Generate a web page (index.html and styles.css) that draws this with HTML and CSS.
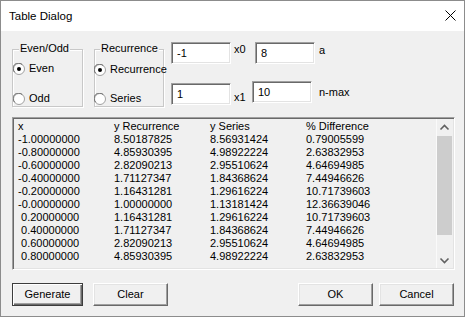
FILE: index.html
```html
<!DOCTYPE html>
<html>
<head>
<meta charset="utf-8">
<title>Table Dialog</title>
<link rel="stylesheet" href="styles.css">
</head>
<body>
<div class="window">
  <div class="titlebar">
    <span class="title">Table Dialog</span>
    <svg class="close" width="11" height="11" viewBox="0 0 11 11"><path d="M0.5 0.5 L10.5 10.5 M10.5 0.5 L0.5 10.5" stroke="#000" stroke-width="1" fill="none"/></svg>
  </div>
  <div class="client">
    <div class="top">
      <div class="group g1">
        <span class="legend">Even/Odd</span>
        <div class="radio-row">
          <svg class="radio" width="12" height="12" viewBox="0 0 12 12"><circle cx="6" cy="6" r="5.5" fill="#fff" stroke="#a0a0a0"/><path d="M1.6 9.2 A5 5 0 0 1 9.2 1.6" stroke="#696969" fill="none"/><circle cx="6" cy="6" r="2" fill="#000"/></svg>
          <span>Even</span>
        </div>
        <div class="radio-row">
          <svg class="radio" width="12" height="12" viewBox="0 0 12 12"><circle cx="6" cy="6" r="5.5" fill="#fff" stroke="#a0a0a0"/><path d="M1.6 9.2 A5 5 0 0 1 9.2 1.6" stroke="#696969" fill="none"/></svg>
          <span>Odd</span>
        </div>
      </div>
      <div class="group g2">
        <span class="legend">Recurrence</span>
        <div class="radio-row">
          <svg class="radio" width="12" height="12" viewBox="0 0 12 12"><circle cx="6" cy="6" r="5.5" fill="#fff" stroke="#a0a0a0"/><path d="M1.6 9.2 A5 5 0 0 1 9.2 1.6" stroke="#696969" fill="none"/><circle cx="6" cy="6" r="2" fill="#000"/></svg>
          <span>Recurrence</span>
        </div>
        <div class="radio-row">
          <svg class="radio" width="12" height="12" viewBox="0 0 12 12"><circle cx="6" cy="6" r="5.5" fill="#fff" stroke="#a0a0a0"/><path d="M1.6 9.2 A5 5 0 0 1 9.2 1.6" stroke="#696969" fill="none"/></svg>
          <span>Series</span>
        </div>
      </div>
      <div class="params">
        <div class="prow r1">
          <div class="edit">-1</div>
          <span class="plabel l-x0">x0</span>
          <div class="edit">8</div>
          <span class="plabel l-a">a</span>
        </div>
        <div class="prow r2">
          <div class="edit e-1">1</div>
          <span class="plabel l-x1">x1</span>
          <div class="edit">10</div>
          <span class="plabel l-n">n-max</span>
        </div>
      </div>
    </div>

    <div class="list">
      <div class="list-body">
        <div class="lrow"><span>x</span><span>y Recurrence</span><span>y Series</span><span>% Difference</span></div>
        <div class="lrow"><span>-1.00000000</span><span>8.50187825</span><span>8.56931424</span><span>0.79005599</span></div>
        <div class="lrow"><span>-0.80000000</span><span>4.85930395</span><span>4.98922224</span><span>2.63832953</span></div>
        <div class="lrow"><span>-0.60000000</span><span>2.82090213</span><span>2.95510624</span><span>4.64694985</span></div>
        <div class="lrow"><span>-0.40000000</span><span>1.71127347</span><span>1.84368624</span><span>7.44946626</span></div>
        <div class="lrow"><span>-0.20000000</span><span>1.16431281</span><span>1.29616224</span><span>10.71739603</span></div>
        <div class="lrow"><span>-0.00000000</span><span>1.00000000</span><span>1.13181424</span><span>12.36639046</span></div>
        <div class="lrow"><span> 0.20000000</span><span>1.16431281</span><span>1.29616224</span><span>10.71739603</span></div>
        <div class="lrow"><span> 0.40000000</span><span>1.71127347</span><span>1.84368624</span><span>7.44946626</span></div>
        <div class="lrow"><span> 0.60000000</span><span>2.82090213</span><span>2.95510624</span><span>4.64694985</span></div>
        <div class="lrow"><span> 0.80000000</span><span>4.85930395</span><span>4.98922224</span><span>2.63832953</span></div>
      </div>
      <div class="scrollbar">
        <div class="sb-btn"><svg width="17" height="17" viewBox="0 0 17 17"><path d="M4.5 10.5 L8.5 6.5 L12.5 10.5" stroke="#606060" stroke-width="1.6" fill="none"/></svg></div>
        <div class="sb-track"><div class="sb-thumb"></div></div>
        <div class="sb-btn"><svg width="17" height="17" viewBox="0 0 17 17"><path d="M4.5 7.5 L8.5 11.5 L12.5 7.5" stroke="#606060" stroke-width="1.6" fill="none"/></svg></div>
      </div>
    </div>

    <div class="buttons">
      <div class="btn-group">
        <div class="btn default">Generate</div>
        <div class="btn">Clear</div>
      </div>
      <div class="btn-group right">
        <div class="btn">OK</div>
        <div class="btn">Cancel</div>
      </div>
    </div>
  </div>
</div>
</body>
</html>
```

FILE: styles.css
```css
html, body {
  margin: 0;
  padding: 0;
  background: #ffffff;
}

body {
  font-family: "Liberation Sans", Arial, sans-serif;
  font-size: 11px;
  line-height: 13px;
  color: #000;
}

.window {
  box-sizing: border-box;
  width: 465px;
  height: 317px;
  border: 1px solid #8c8c8c;
  display: flex;
  flex-direction: column;
  background: #f0f0f0;
}

.titlebar {
  height: 30px;
  flex: none;
  background: #fff;
  display: flex;
  align-items: center;
  justify-content: space-between;
  padding: 0 8px 0 8px;
}

.title {
  font-size: 11.5px;
}

.close {
  display: block;
  margin-top: -1px;
}

.client {
  flex: 1;
  padding: 11px 0 0 11px;
}

.top {
  display: flex;
  align-items: flex-start;
  height: 65px;
}

.group {
  position: relative;
  box-sizing: border-box;
  height: 58px;
  margin-top: 7px;
  border: 1px solid #c8c8c8;
  box-shadow: inset 1px 1px 0 #fff, 1px 1px 0 #fff;
  display: flex;
  flex-direction: column;
  justify-content: space-between;
  padding-bottom: 1px;
}

.g1 {
  width: 71px;
  padding-top: 12px;
}

.g2 {
  width: 70px;
  margin-left: 11px;
  padding-top: 13px;
}

.legend {
  position: absolute;
  top: -8px;
  left: 6px;
  padding: 0 1px;
  background: #f0f0f0;
}

.g2 .legend {
  left: 5px;
}

.radio-row {
  display: flex;
  align-items: center;
  height: 13px;
  white-space: nowrap;
}

.radio {
  display: block;
  flex: none;
  margin-right: 4px;
}

.g2 .radio {
  margin-left: -1px;
}

.params {
  margin-left: 7px;
  display: flex;
  flex-direction: column;
}

.prow {
  display: flex;
  align-items: flex-start;
}

.r2 {
  margin-top: 17px;
}

.edit {
  box-sizing: border-box;
  width: 60px;
  height: 22px;
  background: #fff;
  border: 1px solid;
  border-color: #a0a0a0 #fff #fff #a0a0a0;
  box-shadow: inset 1px 1px 0 #696969, inset -1px -1px 0 #e3e3e3;
  padding: 0 0 0 5px;
  display: flex;
  align-items: center;
}

.e-1 {
  margin-top: 2px;
}

.plabel {
  display: block;
}

.l-x0 {
  width: 21px;
  padding-left: 3px;
  margin-top: 1px;
}

.l-a {
  margin-left: 4px;
  margin-top: 2px;
}

.l-x1 {
  width: 18px;
  padding-left: 3px;
  margin-top: 10px;
}

.l-n {
  margin-left: 7px;
  margin-top: 5px;
}

.list {
  box-sizing: border-box;
  width: 443px;
  height: 153px;
  margin-top: 10px;
  border: 1px solid;
  border-color: #a0a0a0 #fff #fff #a0a0a0;
  box-shadow: inset 1px 1px 0 #696969, inset -1px -1px 0 #e3e3e3;
  padding: 1px;
  display: flex;
}

.list-body {
  flex: 1;
  padding: 1px 0 0 4px;
  overflow: hidden;
}

.lrow {
  display: grid;
  grid-template-columns: 96px 96px 96px 96px;
  height: 13px;
  white-space: pre;
}

.scrollbar {
  width: 17px;
  flex: none;
  display: flex;
  flex-direction: column;
  background: #f0f0f0;
  box-shadow: inset 1px 0 0 #fafafa;
}

.sb-btn {
  height: 17px;
  flex: none;
}

.sb-btn svg {
  display: block;
}

.sb-track {
  flex: 1;
  padding: 0 1px 0 1px;
}

.sb-thumb {
  height: 99px;
  background: #cdcdcd;
}

.buttons {
  display: flex;
  justify-content: space-between;
  margin-top: 13px;
  width: 442px;
}

.btn-group {
  display: flex;
  gap: 10px;
}

.btn-group.right {
  gap: 6px;
}

.btn {
  box-sizing: border-box;
  width: 75px;
  height: 23px;
  background: #f0f0f0;
  border: 1px solid;
  border-color: #fff #696969 #696969 #fff;
  box-shadow: inset -1px -1px 0 #a0a0a0, inset 1px 1px 0 #e3e3e3;
  display: flex;
  align-items: center;
  justify-content: center;
}

.btn.default {
  border-color: #3c3c3c;
  box-shadow: inset 1px 1px 0 #fff, inset -1px -1px 0 #696969, inset -2px -2px 0 #a0a0a0;
  width: 71px;
}
```
